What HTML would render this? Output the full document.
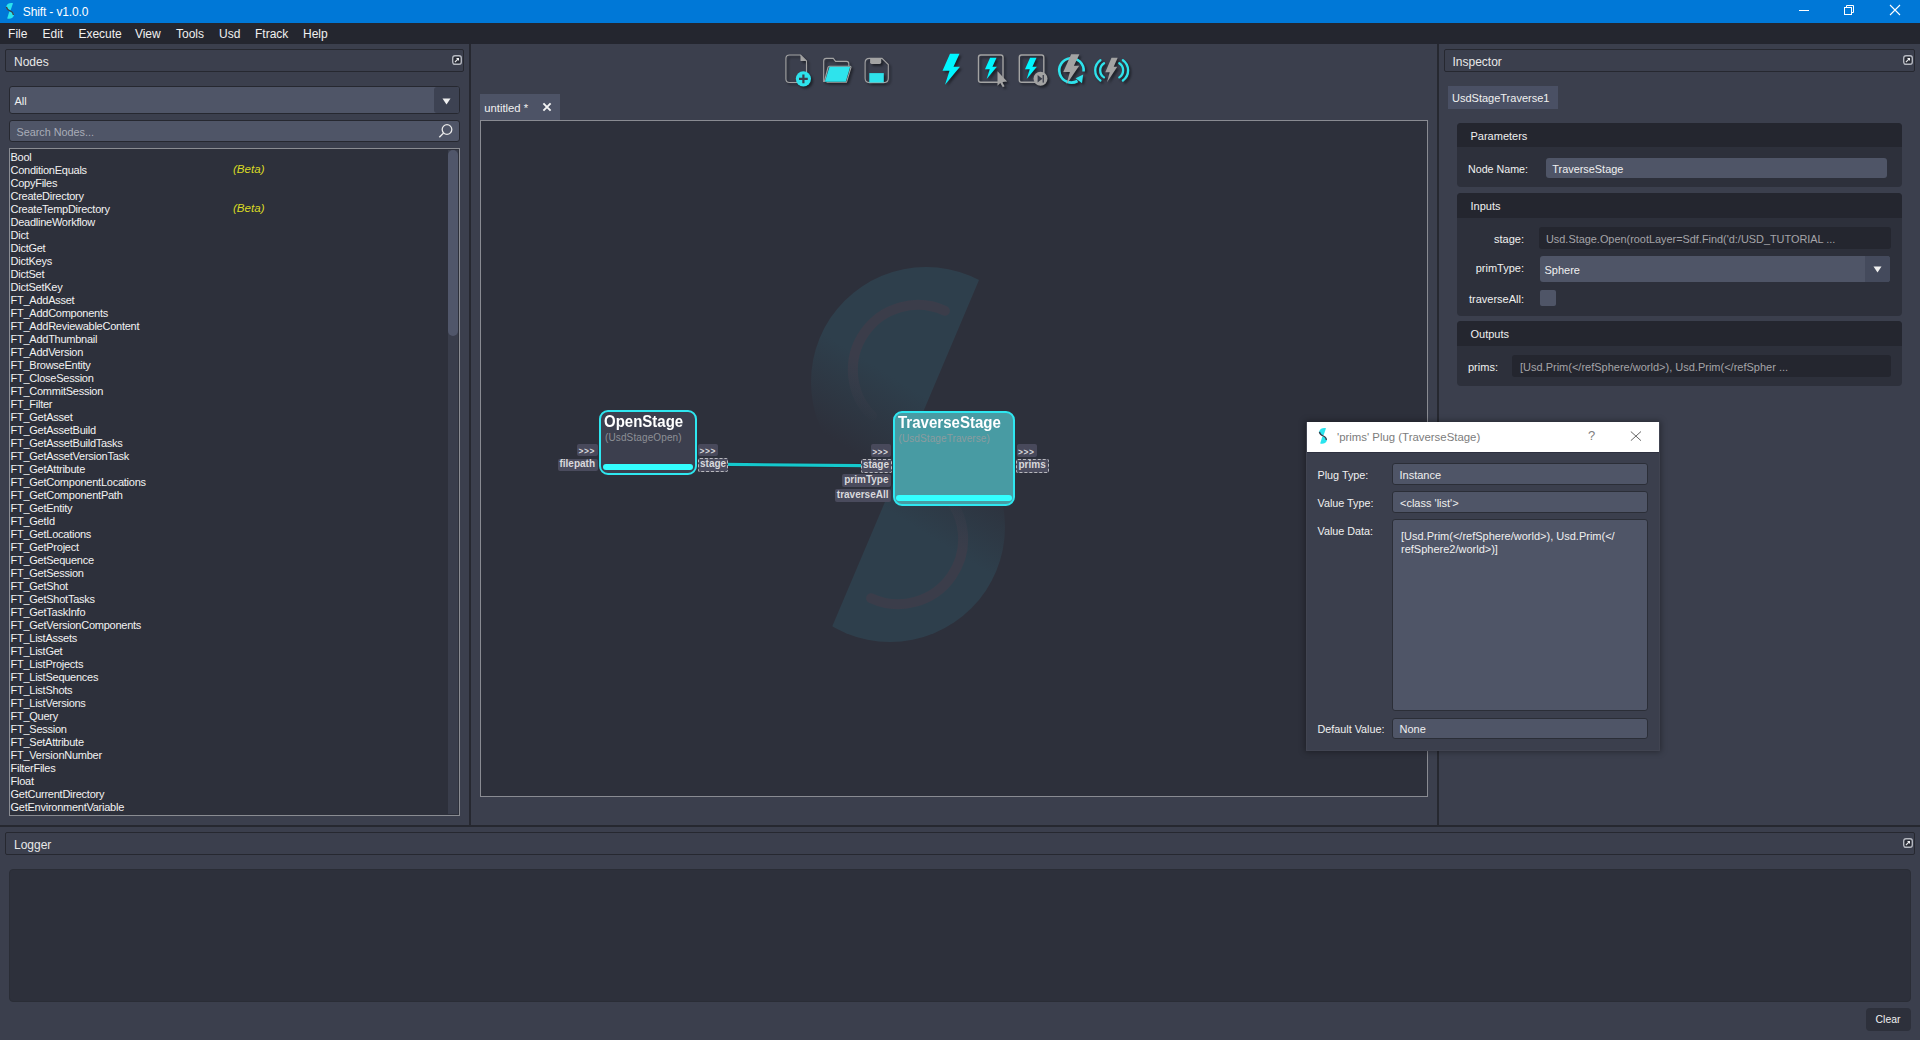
<!DOCTYPE html>
<html><head><meta charset="utf-8"><style>
html,body{margin:0;padding:0;width:1920px;height:1040px;overflow:hidden;background:#3b3f4d;font-family:"Liberation Sans",sans-serif;}
body>div,body>svg{position:absolute;}
.t{white-space:pre;line-height:1;}
</style></head><body>
<div style="left:0px;top:0px;width:1920px;height:23px;background:#0078d7"></div>
<div class="t " style="left:22.8px;top:5.84px;font-size:12px;color:#ffffff;letter-spacing:-0.13px">Shift - v1.0.0</div>
<div style="left:1799px;top:10px;width:10px;height:1px;background:#fff"></div>
<svg style="left:1843px;top:4px" width="12" height="12"><rect x="1.5" y="3.5" width="7" height="7" fill="none" stroke="#fff"/><path d="M3.5 3.5V1.5H10.5V8.5H8.5" fill="none" stroke="#fff"/></svg>
<svg style="left:1889px;top:4px" width="12" height="12"><path d="M1 1L11 11M11 1L1 11" stroke="#fff" stroke-width="1.1"/></svg>
<svg style="left:0px;top:0px" width="20" height="22" viewBox="0 0 20 22"><path d="M13 3.2C10 2.6 7.2 3.4 6.3 6.2C5.8 8 6.8 9.5 8.6 10.4L10.6 10.3Z" fill="#2ae4ee"/>
<path d="M7.2 18.6C10.2 19.2 13 18.4 13.8 15.6C14.3 13.8 13.3 12.3 11.5 11.4L9.3 11.5Z" fill="#2ae4ee"/>
<path d="M6.4 6.8C6.8 9 8.5 10.3 10.3 11C12 11.7 13.2 12.8 13.4 15" fill="none" stroke="#3b3e4c" stroke-width="1.3"/></svg>
<div style="left:0px;top:23px;width:1920px;height:21px;background:#24262f"></div>
<div class="t " style="left:8.1px;top:27.64px;font-size:12px;color:#f0f0f0;">File</div>
<div class="t " style="left:42.5px;top:27.64px;font-size:12px;color:#f0f0f0;">Edit</div>
<div class="t " style="left:78.4px;top:27.64px;font-size:12px;color:#f0f0f0;">Execute</div>
<div class="t " style="left:134.9px;top:27.64px;font-size:12px;color:#f0f0f0;">View</div>
<div class="t " style="left:176px;top:27.64px;font-size:12px;color:#f0f0f0;">Tools</div>
<div class="t " style="left:219px;top:27.64px;font-size:12px;color:#f0f0f0;">Usd</div>
<div class="t " style="left:255px;top:27.64px;font-size:12px;color:#f0f0f0;">Ftrack</div>
<div class="t " style="left:303px;top:27.64px;font-size:12px;color:#f0f0f0;">Help</div>
<div style="left:0px;top:44px;width:1920px;height:996px;background:#3b3f4d"></div>
<div style="left:469px;top:44px;width:2px;height:781px;background:#262830"></div>
<div style="left:1437px;top:44px;width:2px;height:781px;background:#262830"></div>
<div style="left:0px;top:825px;width:1920px;height:2px;background:#262830"></div>
<div style="left:5px;top:49px;width:459px;height:23px;border:1px solid #262830;box-sizing:border-box;border-radius:2px"></div>
<div class="t " style="left:14px;top:55.84px;font-size:12px;color:#e8e8e8;">Nodes</div>
<svg style="left:452px;top:55px" width="10" height="10"><rect x="0.7" y="0.7" width="8.6" height="8.6" rx="2.2" fill="#292c36" stroke="#b4b7bf" stroke-width="1.4"/><path d="M2.9 7.1L6.6 3.4" stroke="#e8e8ea" stroke-width="1.2"/><path d="M4 3H7V6Z" fill="#f0f0f2"/></svg>
<div style="left:9px;top:86px;width:451px;height:28px;background:#4f5567;border:1px solid #262830;box-sizing:border-box;border-radius:3px"></div>
<div style="left:434px;top:87px;width:25px;height:26px;background:#3d4252;border-radius:3px 2px 2px 3px"></div>
<div class="t " style="left:14.5px;top:95.69px;font-size:11px;color:#f0f0f0;">All</div>
<svg style="left:442px;top:97.7px" width="9" height="7"><path d="M0.5 0.5H8.5L4.5 6.5Z" fill="#f0f0f0"/></svg>
<div style="left:9px;top:120px;width:451px;height:22px;background:#4f5567;border:1px solid #262830;box-sizing:border-box;border-radius:3px"></div>
<div class="t " style="left:16.5px;top:127.11px;font-size:10.8px;color:#a9adb8;">Search Nodes...</div>
<svg style="left:436.7px;top:122px" width="18" height="18"><circle cx="10" cy="7.5" r="4.8" fill="none" stroke="#e8e8e8" stroke-width="1.3"/><path d="M6.6 10.9L2.3 15.2" stroke="#e8e8e8" stroke-width="1.4"/></svg>
<div style="left:9px;top:148px;width:451px;height:668px;background:#2d303b;border:1px solid #8a8c92;box-sizing:border-box"></div>
<div style="left:448px;top:150px;width:10px;height:664px;background:#393d4b"></div>
<div style="left:448px;top:150px;width:10px;height:186px;background:#50566a;border-radius:5px"></div>
<div class="t " style="left:10.5px;top:151.89px;font-size:11px;color:#f2f2f2;letter-spacing:-0.25px">Bool</div>
<div class="t " style="left:10.5px;top:164.89px;font-size:11px;color:#f2f2f2;letter-spacing:-0.25px">ConditionEquals</div>
<div class="t " style="left:10.5px;top:177.89px;font-size:11px;color:#f2f2f2;letter-spacing:-0.25px">CopyFiles</div>
<div class="t " style="left:10.5px;top:190.89px;font-size:11px;color:#f2f2f2;letter-spacing:-0.25px">CreateDirectory</div>
<div class="t " style="left:10.5px;top:203.89px;font-size:11px;color:#f2f2f2;letter-spacing:-0.25px">CreateTempDirectory</div>
<div class="t " style="left:10.5px;top:216.89px;font-size:11px;color:#f2f2f2;letter-spacing:-0.25px">DeadlineWorkflow</div>
<div class="t " style="left:10.5px;top:229.89px;font-size:11px;color:#f2f2f2;letter-spacing:-0.25px">Dict</div>
<div class="t " style="left:10.5px;top:242.89px;font-size:11px;color:#f2f2f2;letter-spacing:-0.25px">DictGet</div>
<div class="t " style="left:10.5px;top:255.89px;font-size:11px;color:#f2f2f2;letter-spacing:-0.25px">DictKeys</div>
<div class="t " style="left:10.5px;top:268.89px;font-size:11px;color:#f2f2f2;letter-spacing:-0.25px">DictSet</div>
<div class="t " style="left:10.5px;top:281.89px;font-size:11px;color:#f2f2f2;letter-spacing:-0.25px">DictSetKey</div>
<div class="t " style="left:10.5px;top:294.89px;font-size:11px;color:#f2f2f2;letter-spacing:-0.25px">FT_AddAsset</div>
<div class="t " style="left:10.5px;top:307.89px;font-size:11px;color:#f2f2f2;letter-spacing:-0.25px">FT_AddComponents</div>
<div class="t " style="left:10.5px;top:320.89px;font-size:11px;color:#f2f2f2;letter-spacing:-0.25px">FT_AddReviewableContent</div>
<div class="t " style="left:10.5px;top:333.89px;font-size:11px;color:#f2f2f2;letter-spacing:-0.25px">FT_AddThumbnail</div>
<div class="t " style="left:10.5px;top:346.89px;font-size:11px;color:#f2f2f2;letter-spacing:-0.25px">FT_AddVersion</div>
<div class="t " style="left:10.5px;top:359.89px;font-size:11px;color:#f2f2f2;letter-spacing:-0.25px">FT_BrowseEntity</div>
<div class="t " style="left:10.5px;top:372.89px;font-size:11px;color:#f2f2f2;letter-spacing:-0.25px">FT_CloseSession</div>
<div class="t " style="left:10.5px;top:385.89px;font-size:11px;color:#f2f2f2;letter-spacing:-0.25px">FT_CommitSession</div>
<div class="t " style="left:10.5px;top:398.89px;font-size:11px;color:#f2f2f2;letter-spacing:-0.25px">FT_Filter</div>
<div class="t " style="left:10.5px;top:411.89px;font-size:11px;color:#f2f2f2;letter-spacing:-0.25px">FT_GetAsset</div>
<div class="t " style="left:10.5px;top:424.89px;font-size:11px;color:#f2f2f2;letter-spacing:-0.25px">FT_GetAssetBuild</div>
<div class="t " style="left:10.5px;top:437.89px;font-size:11px;color:#f2f2f2;letter-spacing:-0.25px">FT_GetAssetBuildTasks</div>
<div class="t " style="left:10.5px;top:450.89px;font-size:11px;color:#f2f2f2;letter-spacing:-0.25px">FT_GetAssetVersionTask</div>
<div class="t " style="left:10.5px;top:463.89px;font-size:11px;color:#f2f2f2;letter-spacing:-0.25px">FT_GetAttribute</div>
<div class="t " style="left:10.5px;top:476.89px;font-size:11px;color:#f2f2f2;letter-spacing:-0.25px">FT_GetComponentLocations</div>
<div class="t " style="left:10.5px;top:489.89px;font-size:11px;color:#f2f2f2;letter-spacing:-0.25px">FT_GetComponentPath</div>
<div class="t " style="left:10.5px;top:502.89px;font-size:11px;color:#f2f2f2;letter-spacing:-0.25px">FT_GetEntity</div>
<div class="t " style="left:10.5px;top:515.89px;font-size:11px;color:#f2f2f2;letter-spacing:-0.25px">FT_GetId</div>
<div class="t " style="left:10.5px;top:528.89px;font-size:11px;color:#f2f2f2;letter-spacing:-0.25px">FT_GetLocations</div>
<div class="t " style="left:10.5px;top:541.89px;font-size:11px;color:#f2f2f2;letter-spacing:-0.25px">FT_GetProject</div>
<div class="t " style="left:10.5px;top:554.89px;font-size:11px;color:#f2f2f2;letter-spacing:-0.25px">FT_GetSequence</div>
<div class="t " style="left:10.5px;top:567.89px;font-size:11px;color:#f2f2f2;letter-spacing:-0.25px">FT_GetSession</div>
<div class="t " style="left:10.5px;top:580.89px;font-size:11px;color:#f2f2f2;letter-spacing:-0.25px">FT_GetShot</div>
<div class="t " style="left:10.5px;top:593.89px;font-size:11px;color:#f2f2f2;letter-spacing:-0.25px">FT_GetShotTasks</div>
<div class="t " style="left:10.5px;top:606.89px;font-size:11px;color:#f2f2f2;letter-spacing:-0.25px">FT_GetTaskInfo</div>
<div class="t " style="left:10.5px;top:619.89px;font-size:11px;color:#f2f2f2;letter-spacing:-0.25px">FT_GetVersionComponents</div>
<div class="t " style="left:10.5px;top:632.89px;font-size:11px;color:#f2f2f2;letter-spacing:-0.25px">FT_ListAssets</div>
<div class="t " style="left:10.5px;top:645.89px;font-size:11px;color:#f2f2f2;letter-spacing:-0.25px">FT_ListGet</div>
<div class="t " style="left:10.5px;top:658.89px;font-size:11px;color:#f2f2f2;letter-spacing:-0.25px">FT_ListProjects</div>
<div class="t " style="left:10.5px;top:671.89px;font-size:11px;color:#f2f2f2;letter-spacing:-0.25px">FT_ListSequences</div>
<div class="t " style="left:10.5px;top:684.89px;font-size:11px;color:#f2f2f2;letter-spacing:-0.25px">FT_ListShots</div>
<div class="t " style="left:10.5px;top:697.89px;font-size:11px;color:#f2f2f2;letter-spacing:-0.25px">FT_ListVersions</div>
<div class="t " style="left:10.5px;top:710.89px;font-size:11px;color:#f2f2f2;letter-spacing:-0.25px">FT_Query</div>
<div class="t " style="left:10.5px;top:723.89px;font-size:11px;color:#f2f2f2;letter-spacing:-0.25px">FT_Session</div>
<div class="t " style="left:10.5px;top:736.89px;font-size:11px;color:#f2f2f2;letter-spacing:-0.25px">FT_SetAttribute</div>
<div class="t " style="left:10.5px;top:749.89px;font-size:11px;color:#f2f2f2;letter-spacing:-0.25px">FT_VersionNumber</div>
<div class="t " style="left:10.5px;top:762.89px;font-size:11px;color:#f2f2f2;letter-spacing:-0.25px">FilterFiles</div>
<div class="t " style="left:10.5px;top:775.89px;font-size:11px;color:#f2f2f2;letter-spacing:-0.25px">Float</div>
<div class="t " style="left:10.5px;top:788.89px;font-size:11px;color:#f2f2f2;letter-spacing:-0.25px">GetCurrentDirectory</div>
<div class="t " style="left:10.5px;top:801.89px;font-size:11px;color:#f2f2f2;letter-spacing:-0.25px">GetEnvironmentVariable</div>
<div class="t " style="left:233px;top:163.08px;font-size:11.6px;color:#dada24;font-style:italic">(Beta)</div>
<div class="t " style="left:233px;top:202.08px;font-size:11.6px;color:#dada24;font-style:italic">(Beta)</div>
<div style="left:480px;top:94px;width:80px;height:26px;background:#4d5366"></div>
<div class="t " style="left:484.2px;top:102.83px;font-size:11.3px;color:#f0f0f0;">untitled *</div>
<svg style="left:542px;top:102px" width="10" height="10"><path d="M1.4 1.4L8.6 8.6M8.6 1.4L1.4 8.6" stroke="#f4f4f4" stroke-width="1.9"/></svg>
<div style="left:480px;top:120px;width:948px;height:677px;background:#2d303b;border:1px solid #898b92;box-sizing:border-box"></div>
<svg style="left:780px;top:50px;filter:drop-shadow(2px 2px 0.8px rgba(24,26,32,0.8))" width="36" height="38" viewBox="780 50 36 38">
<path d="M789.5 55H800.5L806.5 61V79.5Q806.5 82.5 803.5 82.5H789.5Q785.9 82.5 785.9 79V58.5Q785.9 55 789.5 55Z" fill="none" stroke="#a3a3a3" stroke-width="1.1"/>
<path d="M800.5 55L806.5 61H800.5Z" fill="#a3a3a3"/>
<circle cx="803.4" cy="78.8" r="7.6" fill="#2ee3ec"/>
<path d="M803.4 74.4V83.2M799 78.8H807.8" stroke="#3b3f4d" stroke-width="2.2"/>
</svg>
<svg style="left:820px;top:54px;filter:drop-shadow(2px 2px 0.8px rgba(24,26,32,0.8))" width="36" height="34" viewBox="820 54 36 34">
<path d="M823.7 82V61Q823.7 58.4 826.3 58.4H833.3L835.6 61.4H846.5Q848.8 61.4 848.8 63.7V66" fill="none" stroke="#a3a3a3" stroke-width="1.1"/>
<path d="M826.5 82.3L846.5 82.3L851 67.2Q851 66.3 850 66.3H829.5Q828.3 66.3 828 67.5L824.3 81.8" fill="none" stroke="#a3a3a3" stroke-width="1.1"/>
<path d="M829.5 66.8H850.2L845.8 81.8H824.8Z" fill="#2ee3ec"/>
</svg>
<svg style="left:860px;top:54px;filter:drop-shadow(2px 2px 0.8px rgba(24,26,32,0.8))" width="34" height="34" viewBox="860 54 34 34">
<path d="M869.5 58.4H882L888.3 64.6V78.3Q888.3 82.6 884 82.6H869.5Q865.1 82.6 865.1 78.3V62.8Q865.1 58.4 869.5 58.4Z" fill="none" stroke="#a3a3a3" stroke-width="1.1"/>
<path d="M870.1 58.6H881.2V62.3Q881.2 63.9 879.6 63.9H871.7Q870.1 63.9 870.1 62.3Z" fill="#a3a3a3"/>
<rect x="869.3" y="73.1" width="14.5" height="9.4" fill="#2ee3ec"/>
</svg>
<svg style="left:936px;top:50px;filter:drop-shadow(2px 2px 0.8px rgba(24,26,32,0.8))" width="30" height="40" viewBox="936 50 30 40"><path transform="translate(941.5 53.8) scale(1.0)" d="M8.5 0H18L12 13H18.5L3.5 31L8 17H1Z" fill="#00f6ff"/></svg>
<svg style="left:974px;top:50px;filter:drop-shadow(2px 2px 0.8px rgba(24,26,32,0.8))" width="36" height="40" viewBox="974 50 36 40">
<rect x="978.5" y="55" width="24.5" height="27.3" rx="2.2" fill="none" stroke="#a3a3a3" stroke-width="1.4"/>
<path transform="translate(984.3 57.8) scale(0.68)" d="M8.5 0H18L12 13H18.5L3.5 31L8 17H1Z" fill="#00f6ff"/>
<path d="M997.5 71.3V85.8L1000.3 83L1002.8 87.2L1004.6 86.3L1002.2 82.1L1007.2 81.6Z" fill="#a3a3a3"/>
</svg>
<svg style="left:1014px;top:50px;filter:drop-shadow(2px 2px 0.8px rgba(24,26,32,0.8))" width="40" height="40" viewBox="1014 50 40 40">
<rect x="1019.3" y="55" width="24.5" height="27.3" rx="2.2" fill="none" stroke="#a3a3a3" stroke-width="1.4"/>
<path transform="translate(1024.3 57.8) scale(0.68)" d="M8.5 0H18L12 13H18.5L3.5 31L8 17H1Z" fill="#00f6ff"/>
<circle cx="1040.5" cy="78.8" r="7" fill="#a3a3a3"/>
<path d="M1037.6 75V82.6L1042.4 78.8Z" fill="#3a3e4b"/><rect x="1042.6" y="75" width="1.3" height="7.6" fill="#3a3e4b"/>
</svg>
<svg style="left:1054px;top:50px;filter:drop-shadow(2px 2px 0.8px rgba(24,26,32,0.8))" width="36" height="40" viewBox="1054 50 36 40">
<path d="M1083.6 71.5 A12.2 12.2 0 1 0 1077.5 81" fill="none" stroke="#2ee3ec" stroke-width="2.6"/>
<path d="M1075.6 78.2L1083.2 74.6L1082 83.2Z" fill="#2ee3ec"/>
<path d="M1071.2 54.2H1079.4L1073.9 65.7H1079.2L1066.4 84.5L1069.9 72.1H1063.3Z" fill="#a3a3a3"/>
</svg>
<svg style="left:1090px;top:50px;filter:drop-shadow(2px 2px 0.8px rgba(24,26,32,0.8))" width="42" height="40" viewBox="1090 50 42 40">
<path d="M1100.4 60.2 A12.5 12.5 0 0 0 1100.4 80.5" fill="none" stroke="#2ee3ec" stroke-width="2.3" stroke-linecap="round"/>
<path d="M1104 63.2 A8.5 8.5 0 0 0 1104 77.4" fill="none" stroke="#2ee3ec" stroke-width="2.3" stroke-linecap="round"/>
<path d="M1122.9 60.2 A12.5 12.5 0 0 1 1122.9 80.5" fill="none" stroke="#2ee3ec" stroke-width="2.3" stroke-linecap="round"/>
<path d="M1119.3 63.2 A8.5 8.5 0 0 1 1119.3 77.4" fill="none" stroke="#2ee3ec" stroke-width="2.3" stroke-linecap="round"/>
<path d="M1111.5 57.7H1117.7L1113.7 66.8H1117.3L1107 82.3L1109.7 72.3H1105.3Z" fill="#a3a3a3"/>
</svg>
<svg style="left:481px;top:121px" width="946" height="675" viewBox="481 121 946 675">
<defs>
<linearGradient id="gu" gradientUnits="userSpaceOnUse" x1="950" y1="290" x2="850" y2="450">
<stop offset="0" stop-color="#2e3f4c" stop-opacity="1"/><stop offset="0.55" stop-color="#2e3f4c" stop-opacity="1"/><stop offset="1" stop-color="#2e3f4c" stop-opacity="0"/></linearGradient>
<linearGradient id="gl" gradientUnits="userSpaceOnUse" x1="866" y1="619" x2="966" y2="459">
<stop offset="0" stop-color="#2e3f4c" stop-opacity="1"/><stop offset="0.55" stop-color="#2e3f4c" stop-opacity="1"/><stop offset="1" stop-color="#2e3f4c" stop-opacity="0"/></linearGradient>
<linearGradient id="au" gradientUnits="userSpaceOnUse" x1="930" y1="300" x2="875" y2="425">
<stop offset="0" stop-color="#3b3d4a" stop-opacity="1"/><stop offset="0.6" stop-color="#3b3d4a" stop-opacity="1"/><stop offset="1" stop-color="#3b3d4a" stop-opacity="0"/></linearGradient>
<linearGradient id="al" gradientUnits="userSpaceOnUse" x1="886" y1="609" x2="941" y2="484">
<stop offset="0" stop-color="#3b3d4a" stop-opacity="1"/><stop offset="0.6" stop-color="#3b3d4a" stop-opacity="1"/><stop offset="1" stop-color="#3b3d4a" stop-opacity="0"/></linearGradient>
<clipPath id="cu"><path d="M979 280L832 627H500V121H1100Z"/></clipPath>
<clipPath id="cl"><path d="M979 280L832 627L820 700H1200V121H1100Z"/></clipPath>
</defs>
<g clip-path="url(#cu)">
<circle cx="926" cy="382" r="115" fill="url(#gu)"/>
<path d="M944.85 310.8 A65 65 0 0 0 872 416" fill="none" stroke="url(#au)" stroke-width="10" stroke-linecap="round"/>
</g>
<g clip-path="url(#cl)">
<circle cx="890" cy="527" r="115" fill="url(#gl)"/>
<path d="M871.15 598.2 A65 65 0 0 0 944 493" fill="none" stroke="url(#al)" stroke-width="10" stroke-linecap="round"/>
</g>
</svg>
<svg style="left:720px;top:455px" width="150" height="20" viewBox="720 455 150 20"><path d="M727 464.4L862 465.6" stroke="#26242e" stroke-width="5" opacity="0.5"/><path d="M727 464.4L862 465.6" stroke="#14c9cd" stroke-width="3.1"/></svg>
<div style="left:599.2px;top:410.2px;width:97.5px;height:65.30000000000001px;background:#3c3f4e;border:2.6px solid #2ee7f0;box-sizing:border-box;border-radius:9px"></div>
<div class="t " style="left:604.4px;top:413.23px;font-size:16.5px;color:#ffffff;font-weight:bold;transform:scaleX(0.909);transform-origin:0 0">OpenStage</div>
<div class="t " style="left:605px;top:432.54px;font-size:10px;color:#8d8f96;letter-spacing:0.12px">(UsdStageOpen)</div>
<div style="left:603px;top:463.7px;width:90px;height:6.5px;background:#33ffff;border-radius:3.5px"></div>
<div style="left:577px;top:443.8px;width:20.5px;height:11.800000000000011px;background:#48495b;border-radius:2px;"></div>
<div class="t " style="left:578.6px;top:446.99px;font-size:8.4px;color:#d9d9dc;font-weight:bold;letter-spacing:0.5px">&gt;&gt;&gt;</div>
<div style="left:558px;top:458.5px;width:39.5px;height:12.100000000000023px;background:#4a4b5d;border-radius:2px;"></div>
<div class="t" style="right:1325.0px;top:458.99px;font-size:10px;color:#d9d9dc;font-weight:bold">filepath</div>
<div style="left:698px;top:443.8px;width:20px;height:11.800000000000011px;background:#48495b;border-radius:2px;"></div>
<div class="t " style="left:699.6px;top:446.99px;font-size:8.4px;color:#d9d9dc;font-weight:bold;letter-spacing:0.5px">&gt;&gt;&gt;</div>
<div style="left:697.5px;top:458px;width:30.5px;height:13.5px;background:#4a4b5d;border-radius:2px;outline:1.3px dashed #b9b9bd;outline-offset:-1.3px;"></div>
<div class="t " style="left:700.0px;top:459.19px;font-size:10px;color:#d9d9dc;font-weight:bold">stage</div>
<div style="left:892.9px;top:411.3px;width:121.89999999999998px;height:94.69999999999999px;background:#489ba3;border:2.6px solid #2ee7f0;box-sizing:border-box;border-radius:9px"></div>
<div class="t " style="left:898px;top:413.83px;font-size:16.5px;color:#ffffff;font-weight:bold;transform:scaleX(0.912);transform-origin:0 0">TraverseStage</div>
<div class="t " style="left:898.5px;top:433.54px;font-size:10px;color:#8b9c9f;letter-spacing:0.1px">(UsdStageTraverse)</div>
<div style="left:896px;top:495px;width:115.5px;height:6.199999999999989px;background:#33ffff;border-radius:3.5px"></div>
<div style="left:870.6px;top:444.4px;width:20.399999999999977px;height:12.600000000000023px;background:#48495b;border-radius:2px;"></div>
<div class="t " style="left:872.2px;top:447.59px;font-size:8.4px;color:#d9d9dc;font-weight:bold;letter-spacing:0.5px">&gt;&gt;&gt;</div>
<div style="left:861px;top:459px;width:30.5px;height:13.5px;background:#4a4b5d;border-radius:2px;outline:1.3px dashed #b9b9bd;outline-offset:-1.3px;"></div>
<div class="t" style="right:1031.0px;top:460.19px;font-size:10px;color:#d9d9dc;font-weight:bold">stage</div>
<div style="left:842.2px;top:474.4px;width:48.799999999999955px;height:12.5px;background:#4a4b5d;border-radius:2px;"></div>
<div class="t" style="right:1031.5px;top:475.08px;font-size:10px;color:#d9d9dc;font-weight:bold">primType</div>
<div style="left:835.3px;top:489px;width:55.700000000000045px;height:12.899999999999977px;background:#4a4b5d;border-radius:2px;"></div>
<div class="t" style="right:1031.5px;top:489.88px;font-size:10px;color:#d9d9dc;font-weight:bold">traverseAll</div>
<div style="left:1016.5px;top:444.4px;width:20.5px;height:12.600000000000023px;background:#48495b;border-radius:2px;"></div>
<div class="t " style="left:1018.1px;top:447.59px;font-size:8.4px;color:#d9d9dc;font-weight:bold;letter-spacing:0.5px">&gt;&gt;&gt;</div>
<div style="left:1016px;top:459px;width:32.5px;height:13.5px;background:#4a4b5d;border-radius:2px;outline:1.3px dashed #b9b9bd;outline-offset:-1.3px;"></div>
<div class="t " style="left:1018.5px;top:460.19px;font-size:10px;color:#d9d9dc;font-weight:bold">prims</div>
<div style="left:1444px;top:49px;width:471px;height:23px;border:1px solid #262830;box-sizing:border-box;border-radius:2px"></div>
<div class="t " style="left:1452.5px;top:55.84px;font-size:12px;color:#e8e8e8;">Inspector</div>
<svg style="left:1903px;top:55px" width="10" height="10"><rect x="0.7" y="0.7" width="8.6" height="8.6" rx="2.2" fill="#292c36" stroke="#b4b7bf" stroke-width="1.4"/><path d="M2.9 7.1L6.6 3.4" stroke="#e8e8ea" stroke-width="1.2"/><path d="M4 3H7V6Z" fill="#f0f0f2"/></svg>
<div style="left:1448px;top:86px;width:110px;height:23px;background:#4a5064"></div>
<div class="t " style="left:1452px;top:92.69px;font-size:11px;color:#f0f0f0;">UsdStageTraverse1</div>
<div style="left:1457px;top:123.3px;width:445px;height:64.00000000000001px;background:#2d303b;border-radius:4px"></div>
<div style="left:1457px;top:123.3px;width:445px;height:24.200000000000003px;background:#24262f;border-radius:4px 4px 0 0"></div>
<div class="t " style="left:1470.5px;top:131.29px;font-size:11px;color:#f0f0f0;">Parameters</div>
<div class="t " style="left:1468px;top:163.74px;font-size:10.7px;color:#f0f0f0;">Node Name:</div>
<div style="left:1546px;top:158px;width:341px;height:20.19999999999999px;background:#4f5567;border-radius:3px"></div>
<div class="t " style="left:1552.3px;top:163.57px;font-size:10.9px;color:#f0f0f0;">TraverseStage</div>
<div style="left:1457px;top:193px;width:445px;height:122.5px;background:#2d303b;border-radius:4px"></div>
<div style="left:1457px;top:193px;width:445px;height:25px;background:#24262f;border-radius:4px 4px 0 0"></div>
<div class="t " style="left:1470.5px;top:200.69px;font-size:11px;color:#f0f0f0;">Inputs</div>
<div class="t" style="right:396px;top:233.69px;font-size:11px;color:#f0f0f0;">stage:</div>
<div style="left:1539px;top:227px;width:352px;height:21.80000000000001px;background:#24262f;border-radius:3px"></div>
<div class="t " style="left:1546px;top:233.77px;font-size:10.9px;color:#a4a4a8;">Usd.Stage.Open(rootLayer=Sdf.Find('d:/USD_TUTORIAL ...</div>
<div class="t" style="right:396px;top:263.19px;font-size:11px;color:#f0f0f0;">primType:</div>
<div style="left:1540px;top:256px;width:350px;height:26px;background:#4f5567;border-radius:3px"></div>
<div style="left:1865px;top:256px;width:25px;height:26px;background:#444a5c;border-radius:0 3px 3px 0"></div>
<div class="t " style="left:1544.5px;top:265.29px;font-size:11px;color:#f0f0f0;">Sphere</div>
<svg style="left:1873px;top:265.5px" width="9" height="7"><path d="M0.5 0.5H8.5L4.5 6.5Z" fill="#f0f0f0"/></svg>
<div class="t" style="right:396px;top:294.09px;font-size:11px;color:#f0f0f0;">traverseAll:</div>
<div style="left:1540px;top:290px;width:16px;height:16px;background:#4f5567;border-radius:2px"></div>
<div style="left:1457px;top:321px;width:445px;height:64.5px;background:#2d303b;border-radius:4px"></div>
<div style="left:1457px;top:321px;width:445px;height:24.80000000000001px;background:#24262f;border-radius:4px 4px 0 0"></div>
<div class="t " style="left:1470.5px;top:328.69px;font-size:11px;color:#f0f0f0;">Outputs</div>
<div class="t " style="left:1468px;top:361.69px;font-size:11px;color:#f0f0f0;">prims:</div>
<div style="left:1512px;top:355px;width:379px;height:22px;background:#24262f;border-radius:3px"></div>
<div class="t " style="left:1520px;top:361.69px;font-size:11px;color:#a4a4a8;">[Usd.Prim(&lt;/refSphere/world&gt;), Usd.Prim(&lt;/refSpher ...</div>
<div style="left:5px;top:832px;width:1910px;height:23px;border:1px solid #262830;box-sizing:border-box;border-radius:2px"></div>
<div class="t " style="left:14px;top:838.84px;font-size:12px;color:#e8e8e8;">Logger</div>
<svg style="left:1903px;top:838px" width="10" height="10"><rect x="0.7" y="0.7" width="8.6" height="8.6" rx="2.2" fill="#292c36" stroke="#b4b7bf" stroke-width="1.4"/><path d="M2.9 7.1L6.6 3.4" stroke="#e8e8ea" stroke-width="1.2"/><path d="M4 3H7V6Z" fill="#f0f0f2"/></svg>
<div style="left:9px;top:869.4px;width:1902px;height:132.60000000000002px;background:#2d303b;border:1px solid #2a2d36;box-sizing:border-box;border-radius:4px"></div>
<div style="left:1866px;top:1007.7px;width:45px;height:23.299999999999955px;background:#2d303b;border-radius:4px"></div>
<div class="t " style="left:1875.6px;top:1015.20px;font-size:10.4px;color:#f0f0f0;">Clear</div>
<div style="left:1306px;top:422px;width:354px;height:328.5px;background:#3b3f4d;box-shadow:0 0 6px 1px rgba(0,0,0,0.35);border:1px solid #414451;box-sizing:border-box"></div>
<div style="left:1307px;top:422px;width:352px;height:30px;background:#ffffff"></div>
<div style="left:1307px;top:452px;width:352px;height:1px;background:#2e3140"></div>
<svg style="left:1315.5px;top:427px" width="17" height="19" viewBox="3 2 17 19"><path d="M13 3.2C10 2.6 7.2 3.4 6.3 6.2C5.8 8 6.8 9.5 8.6 10.4L10.6 10.3Z" fill="#2ae4ee"/>
<path d="M7.2 18.6C10.2 19.2 13 18.4 13.8 15.6C14.3 13.8 13.3 12.3 11.5 11.4L9.3 11.5Z" fill="#2ae4ee"/>
<path d="M6.4 6.8C6.8 9 8.5 10.3 10.3 11C12 11.7 13.2 12.8 13.4 15" fill="none" stroke="#3b3e4c" stroke-width="1.3"/></svg>
<div class="t " style="left:1337px;top:431.75px;font-size:11.4px;color:#7c7c7c;">'prims' Plug (TraverseStage)</div>
<div class="t " style="left:1588px;top:429.00px;font-size:13px;color:#808080;">?</div>
<svg style="left:1630px;top:431px" width="12" height="10"><path d="M0.8 0.5L11 9.7M11 0.5L0.8 9.7" stroke="#666" stroke-width="1"/></svg>
<div class="t " style="left:1317.5px;top:469.86px;font-size:10.8px;color:#f0f0f0;">Plug Type:</div>
<div style="left:1392px;top:463px;width:256px;height:22px;background:#4f5567;border:1px solid #2b2e37;box-sizing:border-box;border-radius:3px"></div>
<div class="t " style="left:1399.5px;top:469.69px;font-size:11px;color:#f0f0f0;">Instance</div>
<div class="t " style="left:1317.5px;top:497.66px;font-size:10.8px;color:#f0f0f0;">Value Type:</div>
<div style="left:1392px;top:491px;width:256px;height:22px;background:#4f5567;border:1px solid #2b2e37;box-sizing:border-box;border-radius:3px"></div>
<div class="t " style="left:1400px;top:498.09px;font-size:11px;color:#f0f0f0;">&lt;class 'list'&gt;</div>
<div class="t " style="left:1317.5px;top:526.16px;font-size:10.8px;color:#f0f0f0;">Value Data:</div>
<div style="left:1392px;top:519px;width:256px;height:191.5px;background:#4f5567;border:1px solid #2b2e37;box-sizing:border-box;border-radius:3px"></div>
<div class="t " style="left:1401px;top:530.69px;font-size:11px;color:#f0f0f0;">[Usd.Prim(&lt;/refSphere/world&gt;), Usd.Prim(&lt;/</div>
<div class="t " style="left:1401px;top:543.69px;font-size:11px;color:#f0f0f0;">refSphere2/world&gt;)]</div>
<div class="t " style="left:1317.5px;top:723.86px;font-size:10.8px;color:#f0f0f0;">Default Value:</div>
<div style="left:1392px;top:717.5px;width:256px;height:21.0px;background:#4f5567;border:1px solid #2b2e37;box-sizing:border-box;border-radius:3px"></div>
<div class="t " style="left:1399.5px;top:723.69px;font-size:11px;color:#f0f0f0;">None</div>
</body></html>
